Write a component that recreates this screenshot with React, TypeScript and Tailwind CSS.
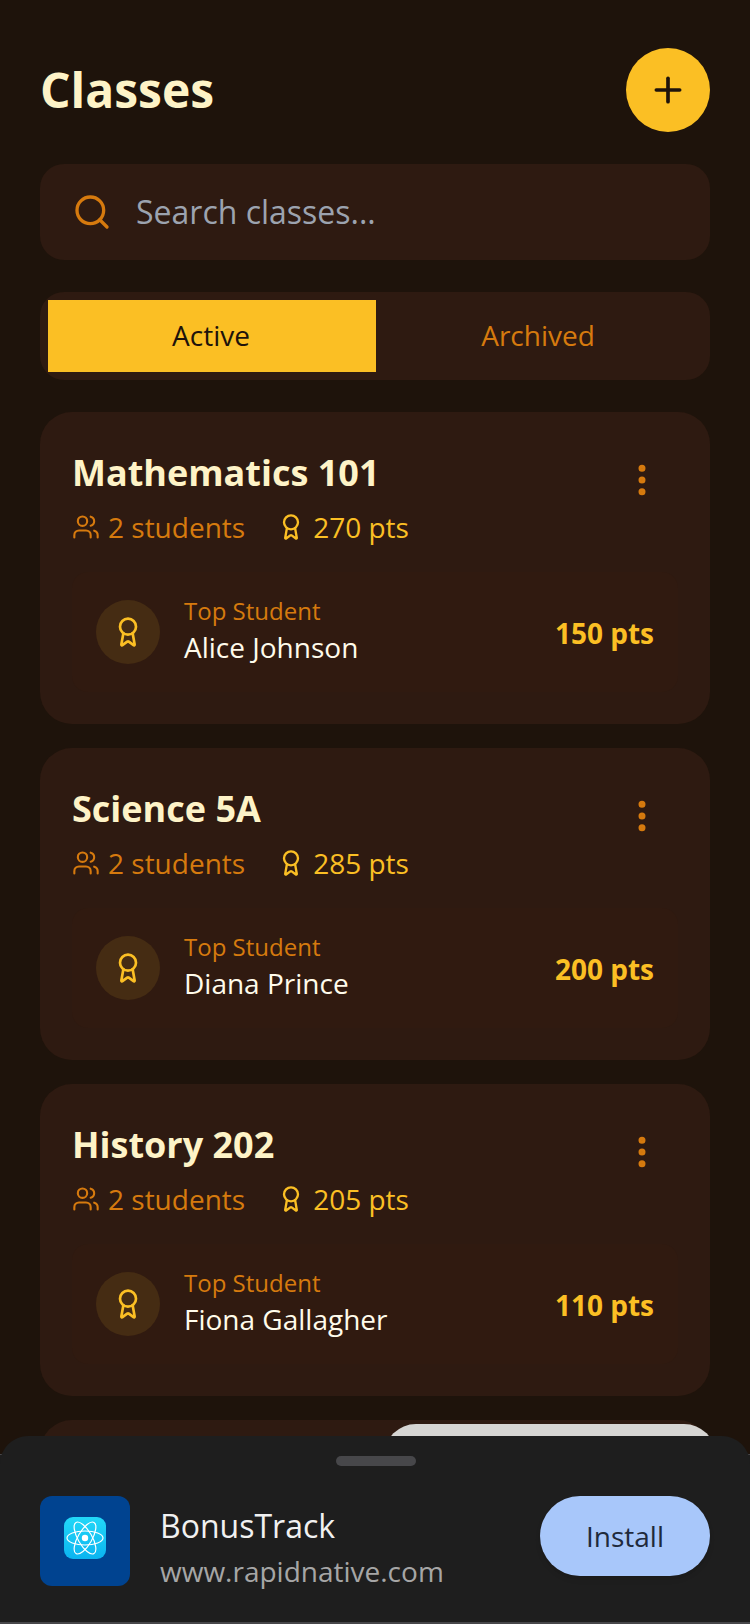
import { Award, MoreVertical, Plus, Search, Users } from 'lucide-react'

interface ClassItem {
  name: string
  points: number
  topStudent: string
  topPoints: number
}

const classes: ClassItem[] = [
  { name: 'Mathematics 101', points: 270, topStudent: 'Alice Johnson', topPoints: 150 },
  { name: 'Science 5A', points: 285, topStudent: 'Diana Prince', topPoints: 200 },
  { name: 'History 202', points: 205, topStudent: 'Fiona Gallagher', topPoints: 110 },
]

function ClassCard({ item }: { item: ClassItem }) {
  return (
    <div className="h-[312px] shrink-0 rounded-[32px] bg-[#2e1a11] pt-[31px] pl-[32px] pr-[32px]">
      <div className="flex items-start justify-between">
        <div>
          <div className="text-[36px] leading-[60px] font-bold text-[#fef3c7]">{item.name}</div>
          <div className="mt-[2px] flex items-center gap-[32px] text-[28px] leading-[44px]">
            <div className="flex items-center gap-[8px] text-[#d67a0e]">
              <Users className="w-[28px] h-[28px]" strokeWidth={1.8} />
              <span>2 students</span>
            </div>
            <div className="flex items-center gap-[8px] text-[#fbbf24]">
              <Award className="w-[28px] h-[28px]" strokeWidth={2} />
              <span>{item.points} pts</span>
            </div>
          </div>
        </div>
        <div className="mt-[17px] mr-[16px]">
          <MoreVertical className="w-[40px] h-[40px] text-[#d67a0e]" strokeWidth={2.2} />
        </div>
      </div>
      <div className="mt-[23px] flex h-[120px] items-center justify-between rounded-[16px] bg-[#301a10] px-[24px]">
        <div className="flex items-center gap-[24px]">
          <div className="flex h-[64px] w-[64px] items-center justify-center rounded-full bg-[#452c13]">
            <Award className="w-[32px] h-[32px] text-[#fbbf24]" strokeWidth={2} />
          </div>
          <div className="mb-[3px]">
            <div className="text-[24px] leading-[32px] text-[#d67a0e]">Top Student</div>
            <div className="mt-[1px] text-[28px] leading-[38px] text-[#fffbeb]">{item.topStudent}</div>
          </div>
        </div>
        <div className="pt-[2px] text-[28px] leading-[40px] font-bold text-[#fbbf24]">{item.topPoints} pts</div>
      </div>
    </div>
  )
}

// Atom mark on the app tile
function AppIcon() {
  return (
    <div className="flex h-[90px] w-[90px] shrink-0 items-center justify-center rounded-[12px] bg-[#004390]">
      <div className="mb-[6px] flex h-[42px] w-[42px] items-center justify-center rounded-[9px] bg-gradient-to-b from-[#22d8f8] to-[#0bb4f0]">
        <svg viewBox="0 0 40 40" className="h-[40px] w-[40px]" fill="none" stroke="#ffffff" strokeWidth="1.2">
          <ellipse cx="20" cy="20" rx="18" ry="7" />
          <ellipse cx="20" cy="20" rx="18" ry="7" transform="rotate(60 20 20)" />
          <ellipse cx="20" cy="20" rx="18" ry="7" transform="rotate(120 20 20)" />
          <circle cx="20" cy="20" r="3.2" fill="#ffffff" stroke="none" />
        </svg>
      </div>
    </div>
  )
}

export default function App() {
  return (
    <div
      className="relative h-[1624px] w-[750px] overflow-hidden bg-[#1e130b]"
      style={{ fontFamily: '"Open Sans", sans-serif' }}
    >
      <div className="flex flex-col px-[40px] pt-[48px]">
        {/* Header */}
        <div className="flex h-[84px] items-center justify-between">
          <h1 className="text-[48px] leading-[64px] font-bold text-[#fef3c7]">Classes</h1>
          <button className="flex h-[84px] w-[84px] items-center justify-center rounded-full bg-[#fbbf24]">
            <Plus className="w-[40px] h-[40px] text-[#1e130b]" strokeWidth={2.2} />
          </button>
        </div>

        {/* Search */}
        <div className="mt-[32px] flex h-[96px] items-center gap-[24px] rounded-[24px] bg-[#2e1a11] px-[32px]">
          <Search className="w-[40px] h-[40px] text-[#d67a0e]" strokeWidth={2} />
          <span className="text-[32px] text-[#9ca3af]">Search classes...</span>
        </div>

        {/* Active / archived tabs */}
        <div className="mt-[32px] flex h-[88px] items-center rounded-[24px] bg-[#2e1a11] px-[8px]">
          <div className="flex h-[72px] w-[328px] items-center justify-center bg-[#fbbf24] pr-[2px] pb-[2px] text-[28px] text-[#1e130b]">
            Active
          </div>
          <div className="flex h-[72px] flex-1 items-center justify-center pr-[2px] pb-[2px] text-[28px] text-[#d67a0e]">
            Archived
          </div>
        </div>

        {/* Class list */}
        <div className="mt-[32px] flex flex-col gap-[24px]">
          {classes.map((item) => (
            <ClassCard key={item.name} item={item} />
          ))}
          <div className="h-[312px] shrink-0 rounded-[32px] bg-[#2e1a11]" />
        </div>
      </div>

      {/* Toast behind the install sheet */}
      <div className="absolute left-[384px] top-[1424px] h-[60px] w-[332px] rounded-t-[32px] bg-[#d6d5d3]" />

      {/* Install sheet */}
      <div className="absolute inset-x-0 top-[1454px] bottom-0 border-t border-b-2 border-[#47474a] bg-[#1e1e1e]" />
      <div className="absolute inset-x-0 top-[1436px] bottom-[2px] rounded-t-[28px] bg-[#1e1e1e]">
        <div className="mt-[20px] ml-[336px] h-[10px] w-[80px] rounded-full bg-[#47474a]" />
        <div className="mt-[30px] flex items-start px-[40px]">
          <AppIcon />
          <div className="mt-[8px] ml-[30px] flex-1">
            <div className="text-[32px] leading-[44px] text-[#f1f1f1]">BonusTrack</div>
            <div className="mt-[1px] text-[28px] leading-[44px] text-[#a6a6a6]">www.rapidnative.com</div>
          </div>
          <button className="flex h-[80px] w-[170px] items-center justify-center rounded-full bg-[#a8c7fa] text-[28px] text-[#1f2a3c] shadow-md">
            Install
          </button>
        </div>
      </div>
    </div>
  )
}
